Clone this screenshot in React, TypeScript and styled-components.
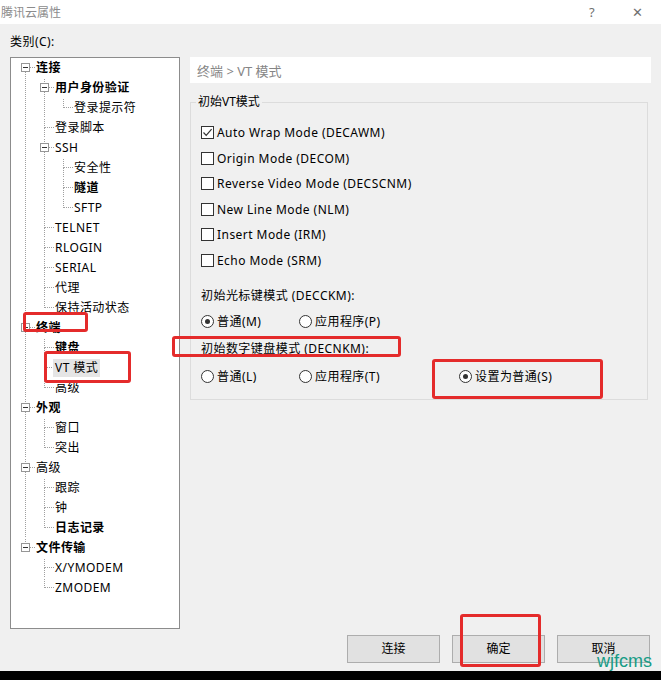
import React from 'react';
import styled, { createGlobalStyle } from 'styled-components';

const GlobalStyle = createGlobalStyle`
  html, body { margin: 0; padding: 0; background: #000; }
  body {
    font-family: "Noto Sans", "Noto Sans CJK SC", sans-serif;
    font-size: 12px;
    letter-spacing: 0.45px;
    color: #000;
  }
  * { box-sizing: border-box; }
`;

const Window = styled.div`
  position: relative;
  width: 661px;
  height: 671px;
  display: flex;
  flex-direction: column;
  background: #f0f0f0;
  overflow: hidden;
`;

const TitleBar = styled.div`
  height: 24px;
  background: #fff;
  display: flex;
  align-items: center;
  padding-left: 1px;
`;

const TitleText = styled.span`
  flex: 1;
  color: #8c8c8c;
  font-size: 12px;
  letter-spacing: 0;
`;

const TitleButton = styled.span`
  width: 46px;
  height: 24px;
  display: flex;
  align-items: center;
  justify-content: center;
  color: #707070;
  font-size: 13px;
`;

const Body = styled.div`
  flex: 1;
  display: flex;
  flex-direction: column;
  padding: 0 10px 0 10px;
`;

const CategoryLabel = styled.div`
  margin-top: 9px;
  height: 18px;
  line-height: 18px;
`;

const Main = styled.div`
  margin-top: 6px;
  height: 572px;
  display: grid;
  grid-template-columns: 170px 1fr;
  column-gap: 10px;
`;

const TreePanel = styled.div`
  border: 1px solid #8c8c8c;
  background: #fff;
  padding-left: 5px;
`;

const TreeRow = styled.div`
  height: 20px;
  display: flex;
  align-items: center;
`;

const Guide = styled.svg`
  width: 19px;
  height: 20px;
  flex: none;
  display: block;
`;

const TreeLabel = styled.span<{ $bold?: boolean; $selected?: boolean }>`
  margin-left: -1px;
  padding: 0 2px;
  height: 18px;
  line-height: 18px;
  white-space: nowrap;
  font-weight: ${(p) => (p.$bold ? 700 : 400)};
  background: ${(p) => (p.$selected ? '#e5e5e5' : 'transparent')};
`;

const RightPanel = styled.div`
  display: flex;
  flex-direction: column;
`;

const Header = styled.div`
  height: 26px;
  background: #fff;
  display: flex;
  align-items: center;
  padding-left: 7px;
  color: #858585;
  font-size: 13px;
  letter-spacing: 0;
`;

const GroupBox = styled.div`
  position: relative;
  margin: 19px 3px 0 0;
  height: 298px;
  border: 1px solid #dcdcdc;
  padding: 17px 10px 0 10px;
`;

const GroupTitle = styled.span`
  position: absolute;
  top: -9px;
  left: 5px;
  padding: 0 2px;
  line-height: 16px;
  background: #f0f0f0;
  letter-spacing: 0;
`;

const CheckList = styled.div`
  display: grid;
  grid-auto-rows: 25.5px;
`;

const OptionRow = styled.label`
  display: flex;
  align-items: center;
  gap: 3px;
  white-space: nowrap;
`;

const CheckBox = styled.span`
  width: 13px;
  height: 13px;
  border: 1px solid #333;
  background: #fff;
  display: flex;
  align-items: center;
  justify-content: center;
  flex: none;
`;

const Radio = styled.span<{ $checked?: boolean }>`
  width: 13px;
  height: 13px;
  border-radius: 50%;
  border: 1px solid #333;
  background: #fff;
  display: flex;
  align-items: center;
  justify-content: center;
  flex: none;
  &::after {
    content: '';
    width: 5px;
    height: 5px;
    border-radius: 50%;
    background: ${(p) => (p.$checked ? '#333' : 'transparent')};
  }
`;

const SectionLabel = styled.div<{ $top: number }>`
  margin-top: ${(p) => p.$top}px;
  line-height: 16px;
  height: 16px;
`;

const RadioRow = styled.div<{ $top: number }>`
  margin-top: ${(p) => p.$top}px;
  height: 20px;
  display: grid;
  grid-template-columns: 98px 160px auto;
  align-items: center;
`;

const ButtonRow = styled.div`
  margin-top: 6px;
  height: 28px;
  display: flex;
  justify-content: flex-end;
  gap: 12px;
  padding-right: 1px;
`;

const Button = styled.button`
  width: 93px;
  height: 28px;
  border: 1px solid #adadad;
  background: #e1e1e1;
  font-family: inherit;
  font-size: 12px;
  color: #000;
  padding: 0;
  padding-bottom: 2px;
`;

const Mark = styled.div<{ $l: number; $t: number; $w: number; $h: number }>`
  position: absolute;
  left: ${(p) => p.$l}px;
  top: ${(p) => p.$t}px;
  width: ${(p) => p.$w}px;
  height: ${(p) => p.$h}px;
  border: 3px solid #e42b2b;
  border-radius: 3px;
  pointer-events: none;
`;

const Watermark = styled.div`
  position: absolute;
  left: 597px;
  top: 653px;
  font-family: "Liberation Sans", sans-serif;
  font-size: 18px;
  letter-spacing: 0;
  color: #179c86;
  line-height: 16px;
`;

type Node = { label: string; bold?: boolean; selected?: boolean; children?: Node[] };

const tree: Node[] = [
  {
    label: '连接',
    bold: true,
    children: [
      { label: '用户身份验证', bold: true, children: [{ label: '登录提示符' }] },
      { label: '登录脚本' },
      {
        label: 'SSH',
        children: [{ label: '安全性' }, { label: '隧道', bold: true }, { label: 'SFTP' }],
      },
      { label: 'TELNET' },
      { label: 'RLOGIN' },
      { label: 'SERIAL' },
      { label: '代理' },
      { label: '保持活动状态' },
    ],
  },
  {
    label: '终端',
    bold: true,
    children: [{ label: '键盘', bold: true }, { label: 'VT 模式', selected: true }, { label: '高级' }],
  },
  { label: '外观', bold: true, children: [{ label: '窗口' }, { label: '突出' }] },
  {
    label: '高级',
    children: [{ label: '跟踪' }, { label: '钟' }, { label: '日志记录', bold: true }],
  },
  { label: '文件传输', bold: true, children: [{ label: 'X/YMODEM' }, { label: 'ZMODEM' }] },
];

type Flat = { node: Node; level: number; guides: boolean[]; isLast: boolean; isFirst: boolean };

function flatten(nodes: Node[], level: number, guides: boolean[], out: Flat[]) {
  nodes.forEach((n, i) => {
    const isLast = i === nodes.length - 1;
    out.push({ node: n, level, guides, isLast, isFirst: level === 0 && i === 0 });
    if (n.children) flatten(n.children, level + 1, [...guides, !isLast], out);
  });
  return out;
}

const rows = flatten(tree, 0, [], []);
const LINE = '#a0a0a0';

const ContinueGuide = ({ on }: { on: boolean }) => (
  <Guide viewBox="0 0 19 20" shapeRendering="crispEdges">
    {on && <line x1="9.5" y1="0" x2="9.5" y2="20" stroke={LINE} strokeDasharray="1 1" />}
  </Guide>
);

const ConnectorGuide = ({ f }: { f: Flat }) => {
  const hasKids = !!f.node.children;
  return (
    <Guide viewBox="0 0 19 20" shapeRendering="crispEdges">
      {!f.isFirst && <line x1="9.5" y1="1" x2="9.5" y2="10" stroke={LINE} strokeDasharray="1 1" />}
      {!f.isLast && <line x1="9.5" y1="10" x2="9.5" y2="20" stroke={LINE} strokeDasharray="1 1" />}
      <line x1="10" y1="9.5" x2="19" y2="9.5" stroke={LINE} strokeDasharray="1 1" />
      {hasKids && (
        <g>
          <rect x="5.5" y="5.5" width="8" height="8" fill="#fff" stroke="#969696" />
          <line x1="7" y1="9.5" x2="12" y2="9.5" stroke="#333" />
        </g>
      )}
    </Guide>
  );
};

const Check = () => (
  <svg width="11" height="11" viewBox="0 0 11 11">
    <path d="M1.5 5.5 L4.2 8.3 L9.6 2.2" fill="none" stroke="#333" strokeWidth="1.2" />
  </svg>
);

const checks = [
  { label: 'Auto Wrap Mode (DECAWM)', checked: true },
  { label: 'Origin Mode (DECOM)' },
  { label: 'Reverse Video Mode (DECSCNM)' },
  { label: 'New Line Mode (NLM)' },
  { label: 'Insert Mode (IRM)' },
  { label: 'Echo Mode (SRM)' },
];

export default function App() {
  return (
    <>
      <GlobalStyle />
      <Window>
        <TitleBar>
          <TitleText>腾讯云属性</TitleText>
          <TitleButton>?</TitleButton>
          <TitleButton>✕</TitleButton>
        </TitleBar>
        <Body>
          <CategoryLabel>类别(C):</CategoryLabel>
          <Main>
            <TreePanel>
              {rows.map((f, i) => (
                <TreeRow key={i}>
                  {f.guides.map((g, j) => (
                    <ContinueGuide key={j} on={g} />
                  ))}
                  <ConnectorGuide f={f} />
                  <TreeLabel $bold={f.node.bold} $selected={f.node.selected}>
                    {f.node.label}
                  </TreeLabel>
                </TreeRow>
              ))}
            </TreePanel>
            <RightPanel>
              <Header>终端 &gt; VT 模式</Header>
              <GroupBox>
                <GroupTitle>初始VT模式</GroupTitle>
                <CheckList>
                  {checks.map((c) => (
                    <OptionRow key={c.label}>
                      <CheckBox>{c.checked && <Check />}</CheckBox>
                      {c.label}
                    </OptionRow>
                  ))}
                </CheckList>
                <SectionLabel $top={15}>初始光标键模式 (DECCKM):</SectionLabel>
                <RadioRow $top={7}>
                  <OptionRow>
                    <Radio $checked />
                    普通(M)
                  </OptionRow>
                  <OptionRow>
                    <Radio />
                    应用程序(P)
                  </OptionRow>
                </RadioRow>
                <SectionLabel $top={10}>初始数字键盘模式 (DECNKM):</SectionLabel>
                <RadioRow $top={9}>
                  <OptionRow>
                    <Radio />
                    普通(L)
                  </OptionRow>
                  <OptionRow>
                    <Radio />
                    应用程序(T)
                  </OptionRow>
                  <OptionRow>
                    <Radio $checked />
                    设置为普通(S)
                  </OptionRow>
                </RadioRow>
              </GroupBox>
            </RightPanel>
          </Main>
          <ButtonRow>
            <Button>连接</Button>
            <Button>确定</Button>
            <Button>取消</Button>
          </ButtonRow>
        </Body>
        <Mark $l={23} $t={312} $w={65} $h={20} />
        <Mark $l={44} $t={351} $w={87} $h={32} />
        <Mark $l={172} $t={336} $w={229} $h={21} />
        <Mark $l={432} $t={359} $w={171} $h={40} />
        <Mark $l={460} $t={614} $w={81} $h={53} />
        <Watermark>wjfcms</Watermark>
      </Window>
    </>
  );
}
